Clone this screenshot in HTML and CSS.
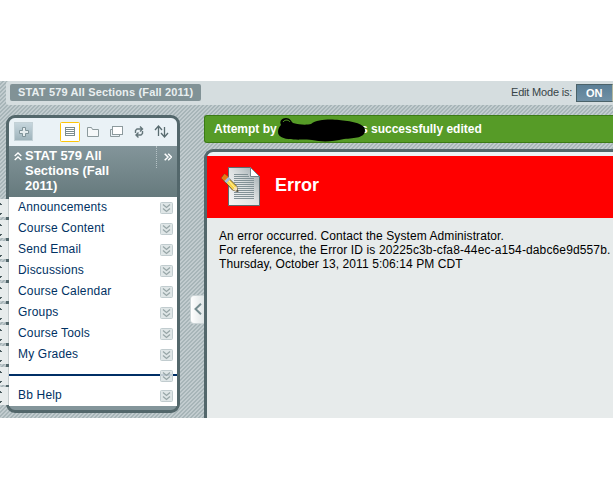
FILE: index.html
```
<!DOCTYPE html>
<html lang="en">
<head>
<meta charset="utf-8">
<title>Error</title>
<link rel="stylesheet" href="styles.css">
</head>
<body>
<svg class="defs" width="0" height="0">
  <defs>
    <linearGradient id="paper" x1="0" y1="1" x2="1" y2="0"><stop offset="0" stop-color="#f6f6f6"/><stop offset=".5" stop-color="#dfe2e3"/><stop offset="1" stop-color="#98a5a9"/></linearGradient>
    <symbol id="chev" viewBox="0 0 13 12">
      <rect x=".5" y=".5" width="12" height="11" rx="1" fill="#dbe2e4" fill-opacity=".88" stroke="#c1cccf"/>
      <path d="M3 2.5l3.5 3 3.5-3M3 6.5l3.5 3 3.5-3" fill="none" stroke="#98a6a8" stroke-width="1.3"/>
    </symbol>
  </defs>
</svg>
<div class="page">
  <header class="topbar">
    <div class="crumb">STAT 579 All Sections (Fall 2011)</div>
    <div class="mode"><span>Edit Mode is:</span><b class="on">ON</b></div>
  </header>
  <div class="columns">
    <aside class="side">
      <div class="tools">
        <svg width="171" height="28" viewBox="0 0 171 28" fill="none">
          <defs><linearGradient id="btn" x1="0" y1="0" x2="0" y2="1"><stop stop-color="#c6d6dd"/><stop offset="1" stop-color="#9eb3bb"/></linearGradient></defs>
          <rect x="5.5" y="4.500" width="18" height="18" fill="url(#btn)" stroke="#c3d1d6"/>
          <path d="M13.500 9.500h3v3h3v3h-3v3h-3v-3h-3v-3h3z" fill="#e5ecee" stroke="#7f9399"/>
          <rect x="51.500" y="4.500" width="19" height="19" rx="1" fill="#fff" stroke="#fdc50b"/>
          <path d="M56 9.500h10M56 11.500h10M56 13.500h10M56 15.500h10M56 17.500h10M56.500 9v9M65.500 9v9" stroke="#7c8d90"/>
          <path d="M78.500 9.500h4l1 2h6v7h-11z" fill="#f5f8f9" stroke="#8c9a9d"/>
          <path d="M103.500 11.500h-2v7h9v-2" stroke="#8c9a9d"/>
          <rect x="103.500" y="8.500" width="10" height="8" fill="#fff" stroke="#8c9a9d"/>
          <path d="M126.500 15v-2.500l1.500-1.500h5M131 8.500l2.500 2.500-2.500 2.500M133.500 13v2.500l-1.500 1.500h-5M129.500 14.500L127 17l2.500 2.500" stroke="#64767a" stroke-width="1.400"/>
          <path d="M149.500 18V8.500M146 12l3.500-4 3.500 4M155.500 9v9M152 15l3.500 4 3.500-4" stroke="#596c70" stroke-width="1.300"/>
        </svg>
      </div>
      <div class="coursehead">
        <svg class="up" width="8" height="9" viewBox="0 0 8 9"><path d="M.7 4L4 1l3.300 3M.7 8L4 5l3.300 3" fill="none" stroke="#fff" stroke-width="1.400"/></svg>
        <h2>STAT 579 All Sections (Fall 2011)</h2>
        <div class="more"><svg width="8" height="8" viewBox="0 0 8 8"><path d="M.7.7L4 4 .7 7.300M4.200.7L7.500 4 4.200 7.300" fill="none" stroke="#fff" stroke-width="1.500"/></svg></div>
      </div>
      <ul class="menu">
        <li><a>Announcements</a><svg><use href="#chev"/></svg></li>
        <li><a>Course Content</a><svg><use href="#chev"/></svg></li>
        <li><a>Send Email</a><svg><use href="#chev"/></svg></li>
        <li><a>Discussions</a><svg><use href="#chev"/></svg></li>
        <li><a>Course Calendar</a><svg><use href="#chev"/></svg></li>
        <li><a>Groups</a><svg><use href="#chev"/></svg></li>
        <li><a>Course Tools</a><svg><use href="#chev"/></svg></li>
        <li><a>My Grades</a><svg><use href="#chev"/></svg></li>
        <li class="rule"><svg><use href="#chev"/></svg></li>
        <li class="last"><a>Bb Help</a><svg><use href="#chev"/></svg></li>
      </ul>
      <div class="handles"><i></i><i></i><i></i><i></i><i></i><i></i><i></i><i></i><i></i><i class="short"></i></div>
    </aside>
    <main class="main">
      <div class="notice"><span>Attempt by</span>
        <svg class="scribble" width="90" height="26" viewBox="0 0 90 26"><path d="M1 15C1 12 2 10 4 8 2 4 5 1 9 1c4 0 5 3 7 5 7 2 14 2 18 1 6-5 20-5 28-4 10 1 26 3 26 10 0 8-10 8-21 9-12 3-23 3-32 1C24 22 1 25 1 15z"/><path d="M6 5c2-3 6-2 7 0" fill="none" stroke="#569b27"/></svg>
        <span class="tail">s successfully edited</span></div>
      <section class="panel">
        <div class="error">
          <svg width="40" height="40" viewBox="0 0 40 40">
            <path d="M7.500 1.500h22l9 9v29h-31z" fill="url(#paper)" stroke="#5c6c70"/>
            <path d="M29.500 1.500v9h9z" fill="#fff" stroke="#71848a"/>
            <path d="M13 8.500h14M13 10.500h15M13 12.500h20M13 14.500h20M13 16.500h20M13 18.500h20M13 20.500h20M13 22.500h20M13 24.500h20M13 26.500h20M13 28.500h20M13 30.500h20M13 32.500h20" stroke="#829196"/>
            <path d="M3.500 8L.5 12l11 12 5.500 1.500-1.500-5.500z" fill="#f9d44b" stroke="#5d5135"/>
            <path d="M3.500 8L.5 12l3 3 4-4z" fill="#e87917"/>
            <path d="M3.500 15l4-4 2 2-4 4z" fill="#9fbce5"/>
            <path d="M11.500 24l4-4 1.500 5.500z" fill="#f6e1b7"/><path d="M15 25l1.500-1.500.8 2.300z" fill="#333"/>
            <path d="M8 15l6 7" stroke="#fff4a3"/>
          </svg>
          <h1>Error</h1>
        </div>
        <div class="text"><p>An error occurred. Contact the System Administrator.</p><p class="ref">For reference, the Error ID is 20225c3b-cfa8-44ec-a154-dabc6e9d557b.</p><p>Thursday, October 13, 2011 5:06:14 PM CDT</p></div>
      </section>
      <div class="collapse"><svg width="8" height="12" viewBox="0 0 8 12"><path d="M7 .7L1.500 6 7 11.300" fill="none" stroke="#758c90" stroke-width="2"/></svg></div>
    </main>
  </div>
</div>
</body>
</html>
```
FILE: styles.css
```
* { box-sizing: border-box; }
body { margin: 0; padding-top: 81px; height: 500px; overflow: hidden; background: #fff; font: 12px/14px "Liberation Sans", Arial, sans-serif; color: #000; }
h1, h2, p, ul { margin: 0; padding: 0; }
svg { display: block; flex: none; }
.defs { position: absolute; }
.page { height: 337px; overflow: hidden; background: linear-gradient(135deg, #c2cccf 0 32%, #a7b5b8 32% 50%, #c2cccf 50% 82%, #a7b5b8 82%) 0 0 / 4px 4px; }
.topbar { height: 24px; margin-left: 6px; background: #d5dddf; border-radius: 3px 0 0 3px; display: flex; justify-content: space-between; padding: 3px 0 0 4px; }
.crumb { width: 191px; height: 17px; background: #819296; border-radius: 2px; color: #e9eff0; font-weight: bold; font-size: 11px; line-height: 17px; padding-left: 8px; white-space: nowrap; letter-spacing: .15px; }
.mode { display: flex; font-size: 11px; line-height: 16px; color: #374447; }
.mode span { width: 65px; white-space: nowrap; letter-spacing: -.18px; }
.on { width: 37px; height: 18px; border: 1px solid #4b6269; border-right-color: #b4b99f; background: linear-gradient(#5b7f96, #7191a6); color: #fff; padding-left: 9px; }
.columns { display: flex; padding: 10px 0 0 6px; }
.side { position: relative; width: 174px; height: 298px; border: 3px solid #53676b; border-radius: 9px; background: #83959a; flex: none; }
.tools { width: 168px; height: 28px; background: #eaf2f6; border-radius: 6px 6px 0 0; overflow: hidden; }
.coursehead { height: 51px; background: linear-gradient(#83959a, #667a7d); display: flex; color: #fff; }
.up { margin: 6px 0 0 5px; }
.coursehead h2 { font-size: 13px; line-height: 15px; width: 106px; margin: 2px 0 0 3px; letter-spacing: -.04px; }
.more { margin-left: 25px; border-left: 1px dotted #b5c2c5; height: 22px; padding: 7px 0 0 7px; }
.menu { list-style: none; background: #fff; height: 209px; letter-spacing: .18px; }
.menu li { height: 21px; display: flex; align-items: flex-start; justify-content: space-between; padding: 3px 4px 0 9px; color: #003163; }
.menu svg { width: 13px; height: 12px; margin-top: 2px; overflow: hidden; }
.menu .rule { justify-content: flex-end; background: linear-gradient(#002f66, #002f66) 0 9px / 100% 2px no-repeat; }
.menu .last { height: 20px; padding-top: 2px; }
.handles { position: absolute; left: -9px; top: 81px; width: 9px; display: flex; flex-direction: column; gap: 3px; background: linear-gradient(90deg, transparent 6px, #53676b 6px); }
.handles i { height: 18px; background: linear-gradient(#495b5e, #495b5e) 0 4px / 1px 1px no-repeat, linear-gradient(#495b5e, #495b5e) 0 5px / 2px 1px no-repeat, linear-gradient(#495b5e, #495b5e) 0 14px / 2px 1px no-repeat, linear-gradient(#495b5e, #495b5e) 0 15px / 1px 1px no-repeat, #e7ecec; border-right: 1px solid #c4cccd; }
.handles .short { margin-top: -1px; }
.main { position: relative; margin-left: 24px; width: 409px; flex: none; }
.notice { height: 28px; background: #569b27; border: 1px solid #3b7b15; border-right: 0; border-radius: 3px 0 0 3px; color: #fff; font-weight: bold; line-height: 26px; padding-left: 9px; display: flex; white-space: nowrap; }
.notice > span:first-child { width: 63px; }
.scribble { position: relative; z-index: 1; margin-top: 1px; }
.tail { margin-left: -6px; }
.panel { margin-top: 6px; height: 275px; border: solid #53676b; border-width: 3px 0 0 3px; border-radius: 9px 0 0 0; background: linear-gradient(#edf2f5 4px, #e7ebeb 4px); padding-top: 4px; }
.error { height: 62px; background: red; display: flex; padding: 10px 0 0 14px; color: #fff; }
.error h1 { font-size: 18px; line-height: 22px; margin: 8px 0 0 14px; }
.text { padding: 11px 0 0 12px; white-space: nowrap; letter-spacing: .08px; }
.text .ref { letter-spacing: .125px; }
.collapse { position: absolute; left: -14px; top: 180px; width: 14px; height: 29px; border: 1px solid #cbd4d6; border-right: 0; border-radius: 4px 0 0 4px; background: linear-gradient(90deg, #fff, #dfe5e6); padding: 7px 0 0 3px; }
```
